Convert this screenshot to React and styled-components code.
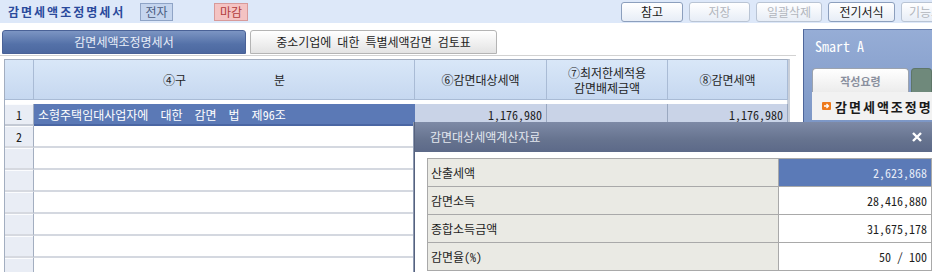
import React from "react";
import styled, { createGlobalStyle, css } from "styled-components";

const GlobalStyle = createGlobalStyle`
  html, body { margin: 0; padding: 0; background: #fff; }
  body {
    width: 932px; height: 272px; overflow: hidden;
    font-family: "Noto Sans Mono CJK KR", "Noto Sans CJK KR", "Noto Sans", sans-serif;
    font-size: 12px; color: #1e1e1e;
  }
  * { box-sizing: border-box; }
`;

const Page = styled.div`
  position: relative;
  width: 932px;
  height: 272px;
  overflow: hidden;
  background: #fff;
`;

/* ---------- top bar ---------- */
const TopBar = styled.div`
  display: flex;
  align-items: center;
  width: 963px;
  height: 23px;
  padding: 0 2px 0 8px;
  background: #dde8f9;
  white-space: nowrap;
`;
const Title = styled.div`
  width: 132px;
  font-weight: 700;
  letter-spacing: 2px;
  color: #2a4a9c;
  line-height: 16px;
`;
const Badge = styled.div`
  display: flex;
  align-items: center;
  justify-content: center;
  width: ${(p) => p.$w}px;
  height: 18px;
  margin-left: ${(p) => p.$ml || 0}px;
  border: 1px solid ${(p) => (p.$tone === "red" ? "#d79a9a" : "#8fa4c6")};
  background: ${(p) => (p.$tone === "red" ? "#f4c3c3" : "#c5d5ee")};
  color: ${(p) => (p.$tone === "red" ? "#b23c3c" : "#4a5c80")};
  line-height: 14px;
`;
const ToolGroup = styled.div`
  display: flex;
  gap: 6px;
  margin-left: auto;
`;
const ToolButton = styled.div`
  display: flex;
  align-items: center;
  justify-content: center;
  width: ${(p) => p.$w}px;
  height: 20px;
  border: 1px solid ${(p) => (p.$disabled ? "#b9c4d4" : "#8c9fbd")};
  border-radius: 3px;
  background: linear-gradient(#ffffff, #e7edf6);
  color: ${(p) => (p.$disabled ? "#b2b6bd" : "#1a1a1a")};
  line-height: 14px;
`;

/* ---------- main ---------- */
const Main = styled.div`
  display: flex;
  align-items: flex-start;
`;
const LeftPane = styled.div`
  width: 796px;
  flex-shrink: 0;
`;
const TabStrip = styled.div`
  display: flex;
  gap: 4px;
  padding: 7px 0 1px 2px;
  border-bottom: 1px solid #d2d2d2;
`;
const Tab = styled.div`
  display: flex;
  align-items: center;
  justify-content: center;
  width: ${(p) => p.$w}px;
  height: 24px;
  border-radius: 3px 3px 0 0;
  line-height: 14px;
  ${(p) =>
    p.$active
      ? css`
          background: linear-gradient(#7c95c3, #5471a8 60%, #4c68a0);
          border: 1px solid #4a6297;
          color: #e9eef8;
        `
      : css`
          background: linear-gradient(#ffffff, #e3e3e3);
          border: 1px solid #b4b4b4;
          color: #1e1e1e;
        `}
`;

const Grid = styled.div`
  display: grid;
  grid-template-columns: 29px 381px 132px 121px 120px;
  grid-auto-rows: 22px;
  width: 786px;
  margin: 3px 0 0 4px;
  border-left: 1px solid #a3aec0;
  border-top: 1px solid #a3aec0;
  border-right: 3px solid #c9cfd9;
`;
const HeadCell = styled.div`
  grid-row: span 2;
  display: flex;
  flex-direction: column;
  align-items: center;
  justify-content: center;
  height: 40px;
  background: linear-gradient(#d9e7f8, #c6d8f0);
  border-right: 1px solid #a9bbd5;
  border-bottom: 1px solid #a9bbd5;
  line-height: 15px;
  text-align: center;
`;
const HeadLine = styled.span`
  display: block;
  height: 15px;
  line-height: 15px;
`;
const SplitLabel = styled.span`
  display: flex;
  justify-content: space-between;
  width: 122px;
`;
const RowNum = styled.div`
  display: flex;
  align-items: center;
  justify-content: center;
  background: #e9edf5;
  border-right: 1px solid #a3aec0;
  border-bottom: 2px solid ${(p) => (p.$first ? "#c3c9d4" : "#d6d9e0")};
  box-shadow: inset 0 1px 0 #fbfcfe;
`;
const DataCell = styled.div`
  display: flex;
  align-items: center;
  padding: 0 4px;
  white-space: pre;
  overflow: hidden;
  ${(p) =>
    p.$selected
      ? css`
          background: #5b79b6;
          color: #ffffff;
          border-bottom: 2px solid #4a66a3;
        `
      : css`
          justify-content: flex-end;
          background: #c9d3e7;
          border-right: 1px solid #9aa8c0;
          border-bottom: 2px solid #b4bfd2;
        `}
`;
const EmptyCell = styled.div`
  grid-column: span 4;
  background: #fff;
  border-bottom: 2px solid #d4d8e0;
`;

/* ---------- side panel ---------- */
const SidePanel = styled.div`
  width: 129px;
  height: 243px;
  margin: 6px 0 0 7px;
  flex-shrink: 0;
  background: linear-gradient(#96add6, #7893c3 45%, #6f8cc0);
  border-left: 1px solid #4e669a;
  border-top: 1px solid #6b82b0;
`;
const PanelHeader = styled.div`
  height: 38px;
  padding: 7px 0 0 11px;
  font-family: "Noto Sans Mono CJK KR", "DejaVu Sans Mono", monospace;
  font-size: 14px;
  line-height: 18px;
  color: #ffffff;
`;
const PanelTabs = styled.div`
  display: flex;
  gap: 2px;
  height: 24px;
  padding-left: 8px;
`;
const PanelTab = styled.div`
  display: flex;
  align-items: center;
  justify-content: center;
  border-radius: 4px 4px 0 0;
  font-size: 11px;
  font-weight: 700;
  ${(p) =>
    p.$active
      ? css`
          width: 97px;
          background: linear-gradient(#ffffff, #ececec);
          border: 1px solid #9ca3ae;
          border-bottom: none;
          color: #8a909e;
        `
      : css`
          flex: 1;
          background: #6f897b;
          border: 1px solid #5e7668;
          border-bottom: none;
        `}
`;
const PanelItem = styled.div`
  display: flex;
  align-items: center;
  gap: 4px;
  height: 28px;
  margin-left: 8px;
  padding-left: 10px;
  background: #f2f2f2;
  white-space: nowrap;
  overflow: hidden;
  font-family: "Noto Sans CJK KR", sans-serif;
  font-size: 13px;
  font-weight: 700;
  letter-spacing: 2px;
  color: #1a1a1a;
`;
const ArrowIcon = styled.svg`
  flex-shrink: 0;
`;

/* ---------- dialog ---------- */
const Dialog = styled.div`
  position: absolute;
  left: 414px;
  top: 122px;
  width: 520px;
  height: 152px;
  background: #ffffff;
  border-left: 1px solid #56627e;
  box-shadow: -1px 0 0 #8e9ab2;
`;
const DialogTitle = styled.div`
  display: flex;
  align-items: center;
  justify-content: space-between;
  height: 30px;
  padding: 0 12px 0 15px;
  background: linear-gradient(#7e8aa6, #66738f 60%, #5c6988);
  color: #e3e7ef;
  line-height: 14px;
`;
const CloseIcon = styled.svg`
  display: block;
`;
const DialogTable = styled.div`
  display: grid;
  grid-template-columns: 351px 153px;
  grid-auto-rows: 28px;
  margin: 6px 0 0 12px;
  border-top: 1px solid #a9a9a9;
  border-left: 1px solid #a9a9a9;
`;
const DLabel = styled.div`
  display: flex;
  align-items: center;
  padding-left: 3px;
  background: #eaeae4;
  border-right: 1px solid #a9a9a9;
  border-bottom: 1px solid #a9a9a9;
`;
const DValue = styled.div`
  display: flex;
  align-items: center;
  justify-content: flex-end;
  padding-right: 4px;
  white-space: pre;
  border-right: 1px solid #a9a9a9;
  border-bottom: 1px solid #a9a9a9;
  background: ${(p) => (p.$selected ? "#5b7ab7" : "#ffffff")};
  color: ${(p) => (p.$selected ? "#e6ecf7" : "#1e1e1e")};
`;

const dialogRows = [
  ["산출세액", "2,623,868", true],
  ["감면소득", "28,416,880"],
  ["종합소득금액", "31,675,178"],
  ["감면율(%)", "50 / 100"],
];

export default function App() {
  return (
    <Page>
      <GlobalStyle />
      <TopBar>
        <Title>감면세액조정명세서</Title>
        <Badge $w={33}>전자</Badge>
        <Badge $w={34} $ml={41} $tone="red">마감</Badge>
        <ToolGroup>
          <ToolButton $w={62}>참고</ToolButton>
          <ToolButton $w={61} $disabled>저장</ToolButton>
          <ToolButton $w={66} $disabled>일괄삭제</ToolButton>
          <ToolButton $w={67}>전기서식</ToolButton>
          <ToolButton $w={60} $disabled>기능모음</ToolButton>
        </ToolGroup>
      </TopBar>

      <Main>
        <LeftPane>
          <TabStrip>
            <Tab $w={244} $active>감면세액조정명세서</Tab>
            <Tab $w={247}>중소기업에 대한 특별세액감면 검토표</Tab>
          </TabStrip>
          <Grid>
            <HeadCell />
            <HeadCell>
              <SplitLabel>
                <span>④구</span>
                <span>분</span>
              </SplitLabel>
            </HeadCell>
            <HeadCell>⑥감면대상세액</HeadCell>
            <HeadCell>
              <HeadLine>⑦최저한세적용</HeadLine>
              <HeadLine>감면배제금액</HeadLine>
            </HeadCell>
            <HeadCell>⑧감면세액</HeadCell>

            <RowNum $first>1</RowNum>
            <DataCell $selected>{"소형주택임대사업자에  대한  감면  법  제96조"}</DataCell>
            <DataCell>1,176,980</DataCell>
            <DataCell />
            <DataCell>1,176,980</DataCell>

            {[2, "", "", "", "", "", ""].map((n, i) => (
              <React.Fragment key={i}>
                <RowNum>{n}</RowNum>
                <EmptyCell />
              </React.Fragment>
            ))}
          </Grid>
        </LeftPane>

        <SidePanel>
          <PanelHeader>Smart A</PanelHeader>
          <PanelTabs>
            <PanelTab $active>작성요령</PanelTab>
            <PanelTab />
          </PanelTabs>
          <PanelItem>
            <ArrowIcon width="9" height="8" viewBox="0 0 9 8">
              <rect x="0" y="0" width="9" height="8" rx="1" fill="#ee7a1c" />
              <path d="M2 4h4M4.5 2l2 2-2 2" stroke="#fff" strokeWidth="1.3" fill="none" />
            </ArrowIcon>
            감면세액조정명세서
          </PanelItem>
        </SidePanel>

        <Dialog>
          <DialogTitle>
            <span>감면대상세액계산자료</span>
            <CloseIcon width="10" height="10" viewBox="0 0 10 10">
              <path d="M1 1L9 9M9 1L1 9" stroke="#ffffff" strokeWidth="2.4" />
            </CloseIcon>
          </DialogTitle>
          <DialogTable>
            {dialogRows.map(([label, value, sel]) => (
              <React.Fragment key={label}>
                <DLabel>{label}</DLabel>
                <DValue $selected={sel}>{value}</DValue>
              </React.Fragment>
            ))}
          </DialogTable>
        </Dialog>
      </Main>
    </Page>
  );
}
